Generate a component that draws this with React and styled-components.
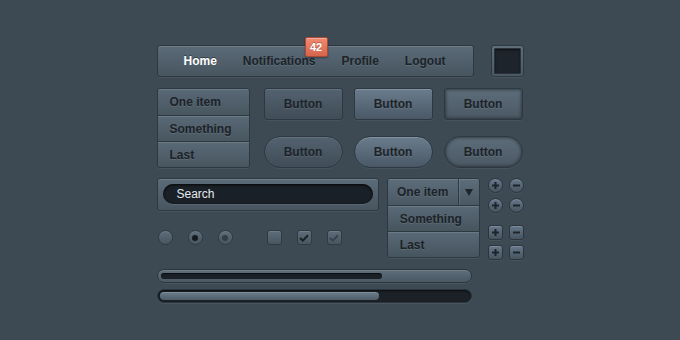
import React from "react";
import styled, { createGlobalStyle, css } from "styled-components";

const Global = createGlobalStyle`
  html, body { margin: 0; padding: 0; }
  body {
    background: #3d4a54;
    font-family: "Liberation Sans", Arial, sans-serif;
    width: 680px;
    height: 340px;
    overflow: hidden;
  }
`;

const Page = styled.div`
  width: 367px;
  margin: 0 auto;
  padding-top: 45px;
  display: flex;
  flex-direction: column;
`;

const Row = styled.div`
  display: flex;
  align-items: flex-start;
  gap: ${(p) => p.$gap || 0}px;
  margin-top: ${(p) => p.$mt || 0}px;
`;

const raised = css`
  background: linear-gradient(#5b6b78, #47555f);
  border: 1px solid #2d3840;
  box-shadow: inset 0 1px 0 rgba(255, 255, 255, 0.12),
    0 1px 0 rgba(255, 255, 255, 0.06);
`;

const Nav = styled.nav`
  ${raised}
  box-sizing: border-box;
  width: 317px;
  height: 32px;
  border-radius: 3px;
  display: flex;
  align-items: center;
  padding-left: 26px;
  gap: 26px;
`;

const NavItem = styled.span`
  position: relative;
  font-size: 12px;
  font-weight: bold;
  color: ${(p) => (p.$active ? "#ffffff" : "#1c2329")};
  text-shadow: ${(p) =>
    p.$active ? "0 -1px 0 rgba(0,0,0,0.4)" : "0 1px 0 rgba(255,255,255,0.1)"};
`;

const Badge = styled.span`
  position: absolute;
  top: -17px;
  right: -12px;
  width: 23px;
  height: 20px;
  box-sizing: border-box;
  border-radius: 2px;
  background: linear-gradient(#f08a70, #d4654c);
  border: 1px solid #a84a37;
  box-shadow: inset 0 1px 0 rgba(255, 255, 255, 0.3), 0 1px 2px rgba(0, 0, 0, 0.35);
  color: #fff;
  font-size: 11px;
  font-weight: bold;
  display: flex;
  align-items: center;
  justify-content: center;
  text-shadow: 0 -1px 0 rgba(0, 0, 0, 0.25);
`;

const Swatch = styled.div`
  box-sizing: border-box;
  width: 33px;
  height: 32px;
  border-radius: 3px;
  background: linear-gradient(#5e6e7b, #4a5863);
  border: 1px solid #2d3840;
  padding: 2px;
  box-shadow: 0 1px 0 rgba(255, 255, 255, 0.06);
`;

const SwatchInner = styled.div`
  width: 100%;
  height: 100%;
  box-sizing: border-box;
  background: #1d242b;
  border: 1px solid #2a333b;
  border-radius: 1px;
  box-shadow: inset 0 1px 2px rgba(0, 0, 0, 0.6);
`;

const List = styled.div`
  box-sizing: border-box;
  width: 93px;
  border: 1px solid #2d3840;
  border-radius: 3px;
  display: flex;
  flex-direction: column;
  overflow: hidden;
  box-shadow: 0 1px 0 rgba(255, 255, 255, 0.06);
`;

const ListItem = styled.div`
  box-sizing: border-box;
  height: 26px;
  display: flex;
  align-items: center;
  padding-left: 12px;
  font-size: 12px;
  font-weight: bold;
  color: #1c2329;
  text-shadow: 0 1px 0 rgba(255, 255, 255, 0.1);
  background: linear-gradient(#596976, #48565f);
  box-shadow: inset 0 1px 0 rgba(255, 255, 255, 0.12);
  & + & {
    border-top: 1px solid #2d3840;
  }
`;

const ButtonGrid = styled.div`
  display: grid;
  grid-template-columns: repeat(3, 79px);
  column-gap: 11px;
  row-gap: 16px;
`;

const variants = {
  dark: css`
    background: linear-gradient(#53626f, #404d58);
    box-shadow: inset 0 1px 0 rgba(255, 255, 255, 0.1), 0 1px 0 rgba(255, 255, 255, 0.05);
  `,
  light: css`
    background: linear-gradient(#6a7c8c, #4a5866);
    box-shadow: inset 0 1px 0 rgba(255, 255, 255, 0.18), 0 1px 0 rgba(255, 255, 255, 0.05);
  `,
  glow: css`
    background: linear-gradient(#5d6d7a, #4a5863);
    box-shadow: inset 0 0 3px 1px rgba(25, 32, 38, 0.6), 0 1px 0 rgba(255, 255, 255, 0.05);
  `,
};

const Button = styled.button`
  box-sizing: border-box;
  width: 79px;
  height: 32px;
  border: 1px solid #2d3840;
  border-radius: ${(p) => (p.$pill ? "16px" : "3px")};
  font-family: "Liberation Sans", Arial, sans-serif;
  font-size: 12px;
  font-weight: bold;
  color: #1c2329;
  text-shadow: 0 1px 0 rgba(255, 255, 255, 0.1);
  padding: 0;
  ${(p) => variants[p.$variant]}
`;

const LeftCol = styled.div`
  width: 223px;
  display: flex;
  flex-direction: column;
`;

const SearchPanel = styled.div`
  ${raised}
  box-sizing: border-box;
  height: 33px;
  border-radius: 3px;
  padding: 5px 5px 0 5px;
`;

const SearchInput = styled.div`
  height: 20px;
  border-radius: 10px;
  background: #1a2027;
  box-shadow: inset 0 1px 3px rgba(0, 0, 0, 0.8), 0 1px 0 rgba(255, 255, 255, 0.08);
  color: #e4e9ed;
  font-size: 12px;
  display: flex;
  align-items: center;
  padding-left: 14px;
`;

const Controls = styled.div`
  display: flex;
  align-items: center;
  margin-top: 19px;
  padding-left: 1px;
`;

const Group = styled.div`
  display: flex;
  gap: 15px;
  margin-right: ${(p) => p.$mr || 0}px;
`;

const Radio = styled.div`
  box-sizing: border-box;
  width: 15px;
  height: 15px;
  border-radius: 50%;
  background: linear-gradient(#5e6d7a, #48565f);
  border: 1px solid #2f3a42;
  box-shadow: inset 0 1px 0 rgba(255, 255, 255, 0.12);
  display: flex;
  align-items: center;
  justify-content: center;
  &::after {
    content: "";
    display: ${(p) => (p.$dot ? "block" : "none")};
    width: 6px;
    height: 6px;
    border-radius: 50%;
    background: ${(p) => (p.$dot === "dim" ? "#323d46" : "#151a1f")};
  }
`;

const Check = styled.div`
  box-sizing: border-box;
  width: 15px;
  height: 15px;
  border-radius: 3px;
  background: linear-gradient(#5e6d7a, #48565f);
  border: 1px solid #2f3a42;
  box-shadow: inset 0 1px 0 rgba(255, 255, 255, 0.12);
  display: flex;
  align-items: center;
  justify-content: center;
`;

const Dropdown = styled.div`
  box-sizing: border-box;
  width: 93px;
  margin-left: 8px;
  border: 1px solid #2d3840;
  border-radius: 3px;
  overflow: hidden;
  display: flex;
  flex-direction: column;
  box-shadow: 0 1px 0 rgba(255, 255, 255, 0.06);
`;

const DropHead = styled.div`
  box-sizing: border-box;
  display: flex;
  height: 26px;
  background: linear-gradient(#5d6d7a, #4a5863);
  box-shadow: inset 0 1px 0 rgba(255, 255, 255, 0.12);
`;

const DropLabel = styled.div`
  flex: 1;
  display: flex;
  align-items: center;
  justify-content: center;
  font-size: 12px;
  font-weight: bold;
  color: #1c2329;
  text-shadow: 0 1px 0 rgba(255, 255, 255, 0.1);
  border-right: 1px solid #2d3840;
`;

const DropArrow = styled.div`
  width: 20px;
  display: flex;
  align-items: center;
  justify-content: center;
  box-shadow: inset 1px 0 0 rgba(255, 255, 255, 0.1);
`;

const DropItem = styled.div`
  box-sizing: border-box;
  height: 26px;
  display: flex;
  align-items: center;
  padding-left: 12px;
  border-top: 1px solid #2d3840;
  font-size: 12px;
  font-weight: bold;
  color: #1c2329;
  text-shadow: 0 1px 0 rgba(255, 255, 255, 0.1);
  background: linear-gradient(#596976, #46545e);
  box-shadow: inset 0 1px 0 rgba(255, 255, 255, 0.12);
`;

const PMGrid = styled.div`
  margin-left: 8px;
  display: grid;
  grid-template-columns: repeat(2, 15px);
  column-gap: 6px;
  row-gap: 5px;
  & > :nth-child(5),
  & > :nth-child(6) {
    margin-top: 7px;
  }
`;

const PM = styled.div`
  box-sizing: border-box;
  width: 15px;
  height: 15px;
  border-radius: ${(p) => (p.$round ? "50%" : "3px")};
  background: linear-gradient(#66778a, #46545f);
  border: 1px solid #2b353d;
  box-shadow: inset 0 1px 0 rgba(255, 255, 255, 0.15), 0 1px 0 rgba(255, 255, 255, 0.05);
  display: flex;
  align-items: center;
  justify-content: center;
`;

const Bars = styled.div`
  display: flex;
  flex-direction: column;
  gap: 6px;
  margin-top: 9px;
  width: 315px;
`;

const Track = styled.div`
  box-sizing: border-box;
  height: 14px;
  border-radius: 7px;
  padding: ${(p) => (p.$dark ? "2px" : "3px")};
  border: 1px solid #2b353d;
  background: ${(p) =>
    p.$dark ? "#1b2127" : "linear-gradient(#5e6e7b, #4a5863)"};
  box-shadow: ${(p) =>
    p.$dark
      ? "inset 0 1px 2px rgba(0,0,0,0.6), 0 1px 0 rgba(255,255,255,0.06)"
      : "inset 0 1px 0 rgba(255,255,255,0.12), 0 1px 0 rgba(255,255,255,0.06)"};
`;

const Fill = styled.div`
  height: 100%;
  border-radius: 4px;
  background: ${(p) =>
    p.$light ? "linear-gradient(#6b7d8c, #4e5c68)" : "#1a2026"};
  box-shadow: ${(p) =>
    p.$light ? "inset 0 1px 0 rgba(255,255,255,0.15)" : "inset 0 1px 1px rgba(0,0,0,0.6)"};
`;

const Icon = ({ kind }) => {
  if (kind === "plus")
    return (
      <svg width="7" height="7" viewBox="0 0 7 7">
        <rect x="2.5" y="0" width="2" height="7" fill="#1d242a" />
        <rect x="0" y="2.5" width="7" height="2" fill="#1d242a" />
      </svg>
    );
  return (
    <svg width="7" height="7" viewBox="0 0 7 7">
      <rect x="0" y="2.5" width="7" height="2" fill="#1d242a" />
    </svg>
  );
};

const CheckMark = ({ color }) => (
  <svg width="10" height="8" viewBox="0 0 10 8">
    <path d="M1 4 L3.8 6.6 L9 1.2" fill="none" stroke={color} strokeWidth="2" />
  </svg>
);

export default function App() {
  return (
    <>
      <Global />
      <Page>
        <Row $gap={17}>
          <Nav>
            <NavItem $active>Home</NavItem>
            <NavItem>
              Notifications
              <Badge>42</Badge>
            </NavItem>
            <NavItem>Profile</NavItem>
            <NavItem>Logout</NavItem>
          </Nav>
          <Swatch>
            <SwatchInner />
          </Swatch>
        </Row>

        <Row $gap={14} $mt={11}>
          <List>
            <ListItem>One item</ListItem>
            <ListItem>Something</ListItem>
            <ListItem>Last</ListItem>
          </List>
          <ButtonGrid>
            <Button $variant="dark">Button</Button>
            <Button $variant="light">Button</Button>
            <Button $variant="glow">Button</Button>
            <Button $variant="dark" $pill>Button</Button>
            <Button $variant="light" $pill>Button</Button>
            <Button $variant="glow" $pill>Button</Button>
          </ButtonGrid>
        </Row>

        <Row $mt={10}>
          <LeftCol>
            <SearchPanel>
              <SearchInput>Search</SearchInput>
            </SearchPanel>
            <Controls>
              <Group $mr={34}>
                <Radio />
                <Radio $dot="on" />
                <Radio $dot="dim" />
              </Group>
              <Group>
                <Check />
                <Check>
                  <CheckMark color="#1a2026" />
                </Check>
                <Check>
                  <CheckMark color="#37434c" />
                </Check>
              </Group>
            </Controls>
          </LeftCol>
          <Dropdown>
            <DropHead>
              <DropLabel>One item</DropLabel>
              <DropArrow>
                <svg width="8" height="7" viewBox="0 0 8 7">
                  <path d="M0 0 H8 L4 7 Z" fill="#1d242a" />
                </svg>
              </DropArrow>
            </DropHead>
            <DropItem>Something</DropItem>
            <DropItem>Last</DropItem>
          </Dropdown>
          <PMGrid>
            <PM $round><Icon kind="plus" /></PM>
            <PM $round><Icon kind="minus" /></PM>
            <PM $round><Icon kind="plus" /></PM>
            <PM $round><Icon kind="minus" /></PM>
            <PM><Icon kind="plus" /></PM>
            <PM><Icon kind="minus" /></PM>
            <PM><Icon kind="plus" /></PM>
            <PM><Icon kind="minus" /></PM>
          </PMGrid>
        </Row>

        <Bars>
          <Track>
            <Fill style={{ width: "72%" }} />
          </Track>
          <Track $dark>
            <Fill $light style={{ width: "71%" }} />
          </Track>
        </Bars>
      </Page>
    </>
  );
}
